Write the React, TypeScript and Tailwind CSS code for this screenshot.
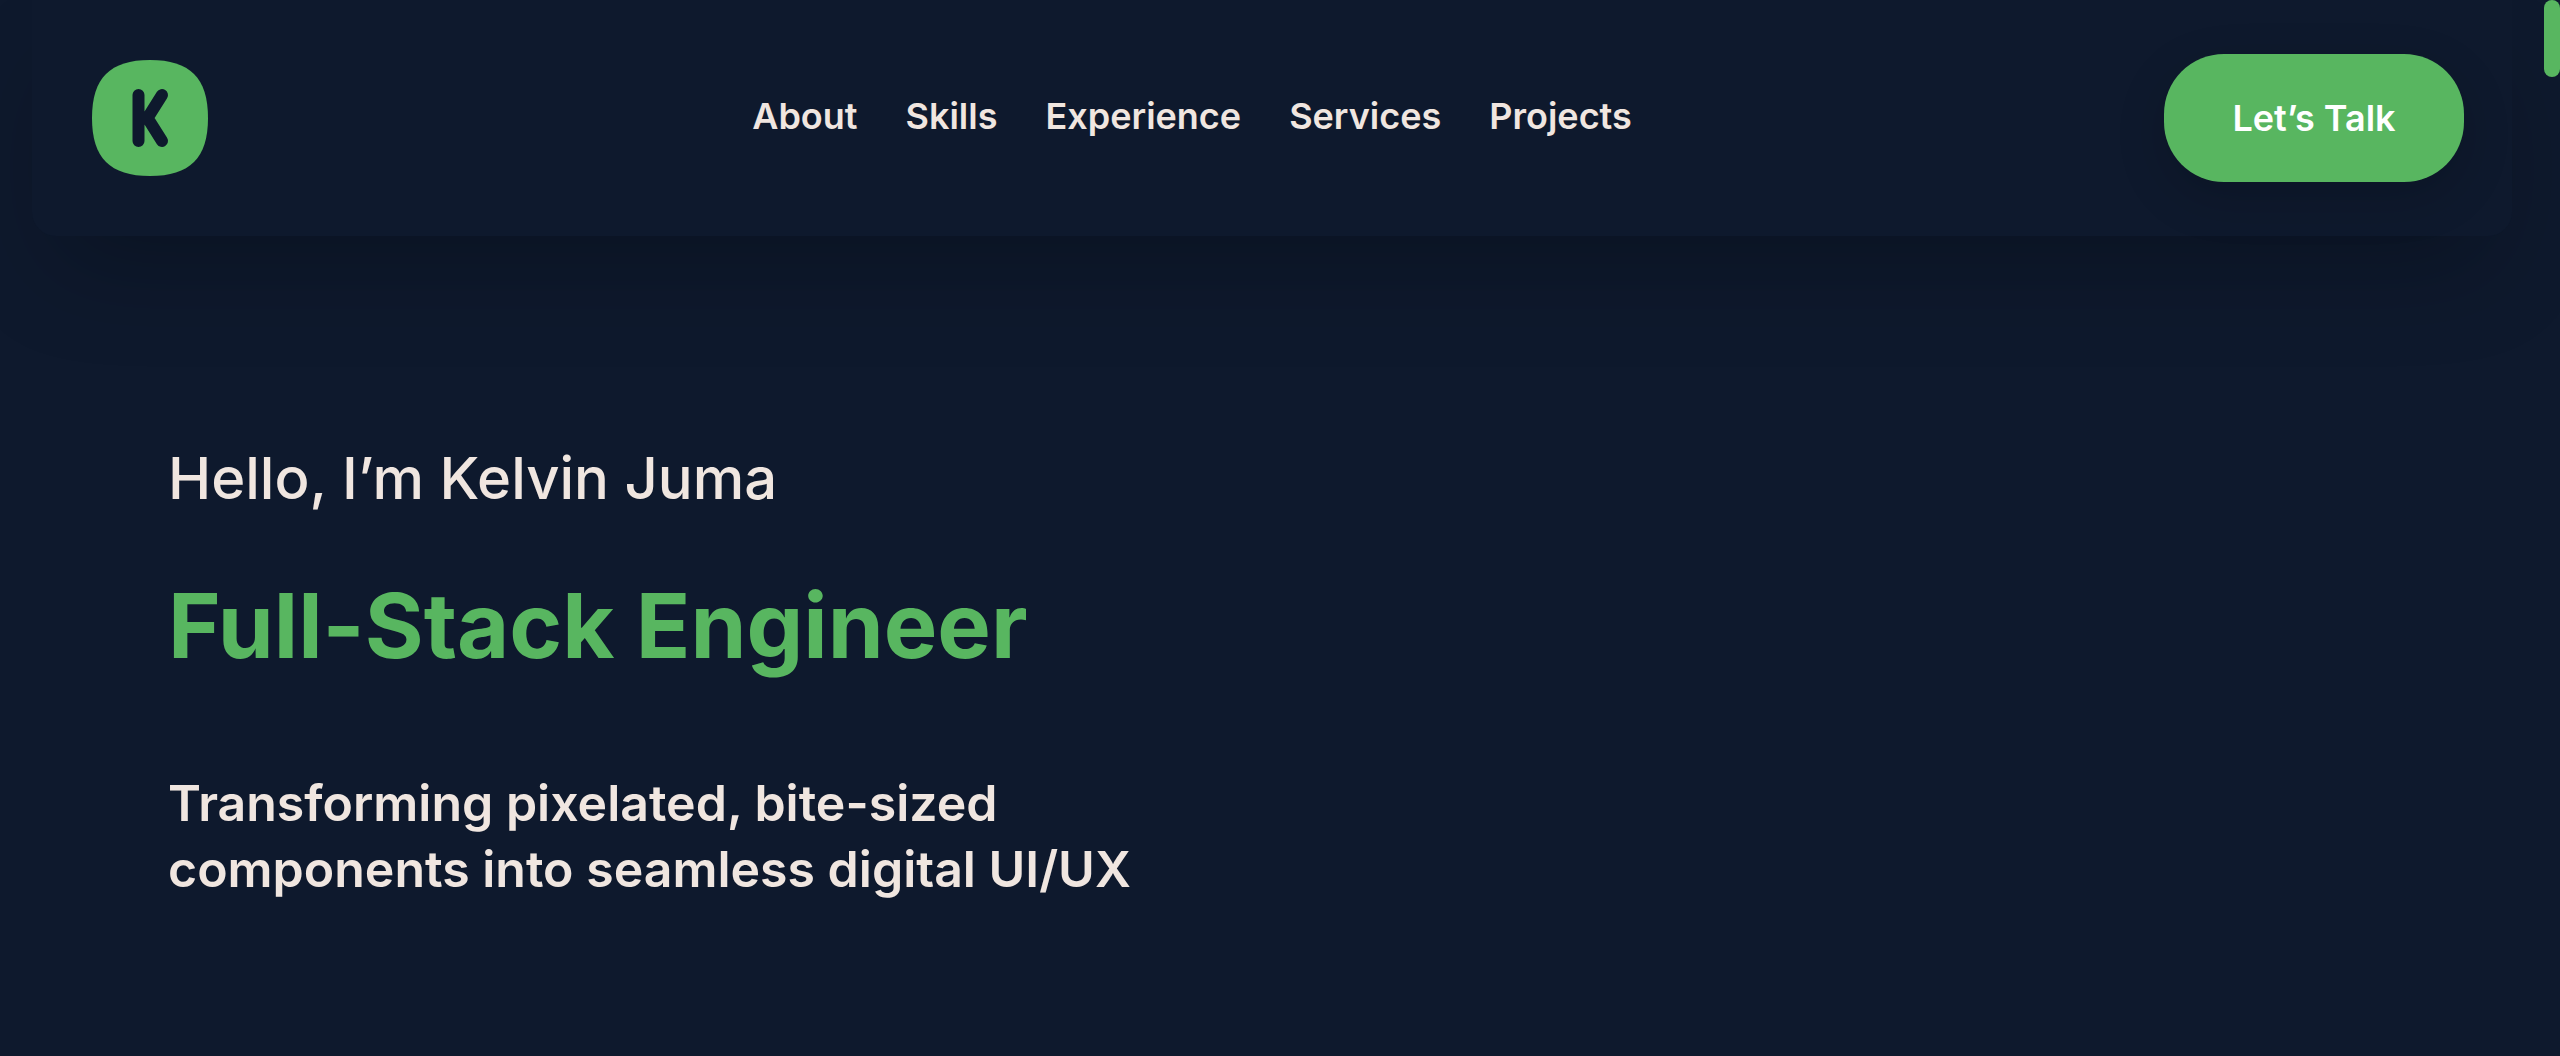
const links = ["About", "Skills", "Experience", "Services", "Projects"];

function Logo() {
  return (
    <svg viewBox="0 0 140 140" className="block size-[140px]" role="img" aria-label="K logo">
      <g transform="translate(12 12)">
        <path
          d="M0 58C0 18 18 0 58 0S116 18 116 58 98 116 58 116 0 98 0 58Z"
          fill="#58b660"
        />
        <path
          d="M46.5 35V81M70 35L55.5 58L70 81"
          fill="none"
          stroke="#0e192d"
          strokeWidth="12"
          strokeLinecap="round"
        />
      </g>
    </svg>
  );
}

function Header() {
  return (
    <header className="mx-8 flex items-center justify-between rounded-b-3xl bg-[#0e192d] px-12 py-12 shadow-[0_50px_100px_-24px_rgba(0,0,0,0.25)]">
      <a href="#home">
        <Logo />
      </a>
      <nav aria-label="Main" className="flex gap-12 pb-1 text-4xl font-semibold text-[#f0e6e0]">
        {links.map((name) => (
          <a key={name} href={`#${name.toLowerCase()}`}>
            {name}
          </a>
        ))}
      </nav>
      <button
        type="button"
        className="h-32 w-[300px] rounded-[60px] bg-[#58b660] text-4xl font-semibold text-white shadow-[0_16px_50px_0_rgba(0,0,0,0.16)]"
      >
        Let’s Talk
      </button>
    </header>
  );
}

export default function App() {
  return (
    <div className="flex min-h-screen bg-[#0e192d] font-['Inter',sans-serif]">
      <div className="min-w-0 flex-1">
        <Header />
        <main id="home" className="px-[168px] pt-[206px] text-[#f0e6e0]">
          <p className="text-[58px] leading-[72px] font-medium">Hello, I’m Kelvin Juma</p>
          <h1 className="mt-16 text-[90px] leading-[96px] font-bold text-[#58b660]">
            Full-Stack Engineer
          </h1>
          <p className="mt-24 max-w-[1024px] text-[50px] leading-[66px] font-semibold">
            Transforming pixelated, bite-sized components into seamless digital UI/UX
          </p>
        </main>
      </div>
      <div aria-hidden="true" className="w-4 shrink-0">
        <div className="h-[77px] rounded-full bg-[#58b660]" />
      </div>
    </div>
  );
}
